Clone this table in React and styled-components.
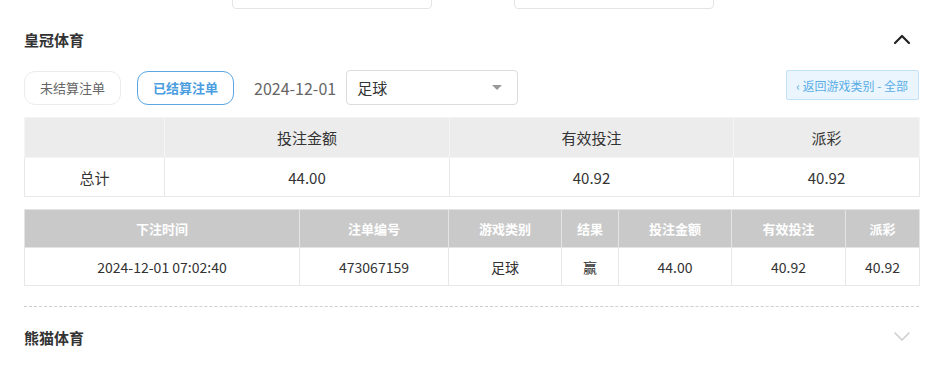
import React from "react";
import styled, { createGlobalStyle } from "styled-components";

const Global = createGlobalStyle`
  html, body { margin: 0; padding: 0; background: #fff; }
  body {
    font-family: "Microsoft YaHei", "Noto Sans CJK SC", "Noto Sans", sans-serif;
    color: #333;
  }
`;

const Page = styled.div`
  width: 895px;
  padding: 0 30px 0 24px;
`;

/* bottom edges of the filter inputs above the section */
const FilterStrip = styled.div`
  height: 9px;
  overflow: hidden;
  display: flex;
  align-items: flex-end;
  gap: 82px;
  padding-left: 208px;
`;

const FilterBox = styled.div`
  width: 198px;
  height: 32px;
  border: 1px solid #e4e4e4;
  border-radius: 4px;
  flex-shrink: 0;
`;

const SectionHead = styled.div`
  height: 34px;
  margin-top: ${(p) => p.$top}px;
  display: flex;
  align-items: center;
  justify-content: space-between;
  padding-right: 8px;
`;

const SectionTitle = styled.div`
  font-size: 15px;
  font-weight: 700;
  color: #333;
`;

const Toolbar = styled.div`
  display: flex;
  align-items: center;
  margin-top: 14px;
  height: 35px;
`;

const Pill = styled.button`
  height: 34px;
  width: 97px;
  padding: 0;
  border-radius: 11px;
  background: #fff;
  font-family: inherit;
  font-size: 13px;
  cursor: pointer;
  margin-right: ${(p) => p.$gap || 0}px;
  border: 1px solid ${(p) => (p.$active ? "#5aa7e3" : "#ececec")};
  color: ${(p) => (p.$active ? "#4a9de0" : "#666")};
  font-weight: ${(p) => (p.$active ? 700 : 400)};
`;

const DateText = styled.span`
  font-size: 16px;
  color: #666;
  margin: 0 10px 0 20px;
`;

const Select = styled.div`
  width: 172px;
  height: 35px;
  box-sizing: border-box;
  border: 1px solid #dcdcdc;
  border-radius: 4px;
  display: flex;
  align-items: center;
  justify-content: space-between;
  padding: 0 15px 0 10px;
  font-size: 15px;
  color: #333;
`;

const Caret = styled.span`
  width: 0;
  height: 0;
  border-left: 5px solid transparent;
  border-right: 5px solid transparent;
  border-top: 5px solid #999;
`;

const BackButton = styled.button`
  margin-left: auto;
  margin-top: -5px;
  height: 30px;
  padding: 0 10px 0 9px;
  background: #eaf5fd;
  border: 1px solid #c4e2f7;
  border-radius: 2px;
  color: #5aaee6;
  font-family: inherit;
  font-size: 12px;
  cursor: pointer;
`;

const Table = styled.table`
  width: 895px;
  border-collapse: collapse;
  table-layout: fixed;
  margin-top: ${(p) => p.$top}px;
`;

const HeadCell = styled.th`
  height: ${(p) => p.$h}px;
  padding: 0;
  text-align: center;
  font-size: ${(p) => (p.$dark ? 13 : 15)}px;
  font-weight: ${(p) => (p.$dark ? 700 : 400)};
  color: ${(p) => (p.$dark ? "#fff" : "#333")};
  background: ${(p) => (p.$dark ? "#c9c9c9" : "#ececec")};
  border: 1px solid ${(p) => (p.$dark ? "#e4e4e4" : "#f4f4f4")};
`;

const Cell = styled.td`
  height: ${(p) => p.$h}px;
  padding: 0;
  text-align: center;
  font-size: ${(p) => p.$size || 14}px;
  color: #333;
  border: 1px solid #e8e8e8;
`;

const Divider = styled.div`
  margin-top: 20px;
  border-top: 1px dashed #cfcfcf;
`;

const Chevron = ({ up, color }) => (
  <svg width="18" height="12" viewBox="0 0 18 12" fill="none">
    <path
      d={up ? "M2 10 L9 3 L16 10" : "M2 2 L9 9 L16 2"}
      stroke={color}
      strokeWidth={up ? 2.2 : 1.6}
      strokeLinecap="round"
      strokeLinejoin="round"
    />
  </svg>
);

const summaryCols = [140, 285, 284, 186];
const detailCols = [275, 149, 113, 57, 113, 114, 74];
const detailHeads = ["下注时间", "注单编号", "游戏类别", "结果", "投注金额", "有效投注", "派彩"];
const detailRow = ["2024-12-01 07:02:40", "473067159", "足球", "赢", "44.00", "40.92", "40.92"];

export default function App() {
  return (
    <Page>
      <Global />
      <FilterStrip>
        <FilterBox />
        <FilterBox />
      </FilterStrip>

      <SectionHead $top={13}>
        <SectionTitle>皇冠体育</SectionTitle>
        <Chevron up color="#222" />
      </SectionHead>

      <Toolbar>
        <Pill $gap={16}>未结算注单</Pill>
        <Pill $active>已结算注单</Pill>
        <DateText>2024-12-01</DateText>
        <Select>
          <span>足球</span>
          <Caret />
        </Select>
        <BackButton>‹ 返回游戏类别 - 全部</BackButton>
      </Toolbar>

      <Table $top={12}>
        <colgroup>
          {summaryCols.map((w, i) => (
            <col key={i} style={{ width: w }} />
          ))}
        </colgroup>
        <thead>
          <tr>
            <HeadCell $h={39} />
            <HeadCell $h={39}>投注金额</HeadCell>
            <HeadCell $h={39}>有效投注</HeadCell>
            <HeadCell $h={39}>派彩</HeadCell>
          </tr>
        </thead>
        <tbody>
          <tr>
            <Cell $h={38} $size={15}>总计</Cell>
            <Cell $h={38} $size={15}>44.00</Cell>
            <Cell $h={38} $size={15}>40.92</Cell>
            <Cell $h={38} $size={15}>40.92</Cell>
          </tr>
        </tbody>
      </Table>

      <Table $top={12}>
        <colgroup>
          {detailCols.map((w, i) => (
            <col key={i} style={{ width: w }} />
          ))}
        </colgroup>
        <thead>
          <tr>
            {detailHeads.map((h) => (
              <HeadCell key={h} $h={37} $dark>{h}</HeadCell>
            ))}
          </tr>
        </thead>
        <tbody>
          <tr>
            {detailRow.map((v, i) => (
              <Cell key={i} $h={37}>{v}</Cell>
            ))}
          </tr>
        </tbody>
      </Table>

      <Divider />

      <SectionHead $top={13}>
        <SectionTitle>熊猫体育</SectionTitle>
        <Chevron color="#cfcfcf" />
      </SectionHead>
    </Page>
  );
}
